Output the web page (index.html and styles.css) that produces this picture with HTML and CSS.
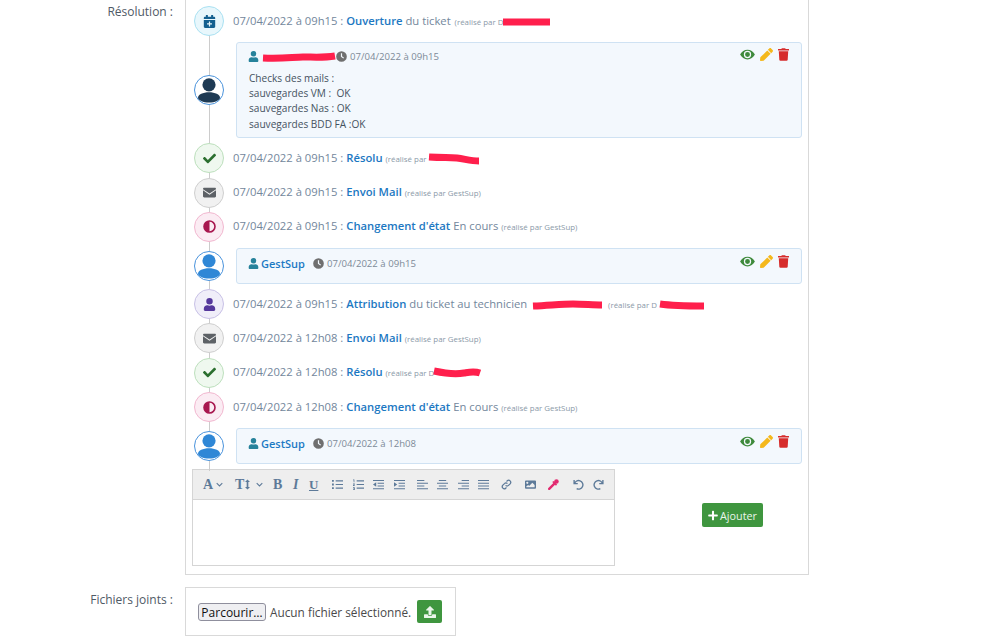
FILE: index.html
```html
<!DOCTYPE html>
<html lang="fr">
<head>
<meta charset="utf-8">
<title>Résolution</title>
<link rel="stylesheet" href="styles.css">
</head>
<body>
<svg class="sprite" xmlns="http://www.w3.org/2000/svg">
  <symbol id="i-cal" viewBox="0 0 448 512"><path d="M96 0h48c9 0 16 7 16 16v48h128V16c0-9 7-16 16-16h48c9 0 16 7 16 16v48h32c26 0 48 22 48 48v48H0v-48c0-26 22-48 48-48h32V16C80 7 87 0 96 0zM0 192h448v272c0 26-22 48-48 48H48c-26 0-48-22-48-48zm200 64v72h-72v48h72v72h48v-72h72v-48h-72v-72z" fill-rule="evenodd"/></symbol>
  <symbol id="i-check" viewBox="0 0 512 512"><path d="M174 439 7 272c-10-10-10-26 0-36l36-36c10-10 26-10 36 0l113 113L433 72c10-10 26-10 36 0l36 36c10 10 10 26 0 36L210 439c-10 10-26 10-36 0z"/></symbol>
  <symbol id="i-mail" viewBox="0 0 512 512"><path d="M48 64h416c26 0 48 22 48 48v19L256 300 0 131v-19c0-26 22-48 48-48zM0 170v230c0 26 22 48 48 48h416c26 0 48-22 48-48V170L256 340z"/></symbol>
  <symbol id="i-half" viewBox="0 0 512 512"><path d="M256 8a248 248 0 1 0 0 496 248 248 0 0 0 0-496zm0 432V72a184 184 0 0 1 0 368z" fill-rule="evenodd"/></symbol>
  <symbol id="i-user" viewBox="0 0 448 512"><path d="M224 256a128 128 0 1 0 0-256 128 128 0 0 0 0 256zm90 32h-17a174 174 0 0 1-146 0h-17C60 288 0 348 0 422v42c0 26 22 48 48 48h352c26 0 48-22 48-48v-42c0-74-60-134-134-134z"/></symbol>
  <symbol id="i-clock" viewBox="0 0 512 512"><path d="M256 8a248 248 0 1 0 0 496 248 248 0 0 0 0-496zm-28 100h56v135l90 66-33 45-113-83z" fill-rule="evenodd"/></symbol>
  <symbol id="i-eye" viewBox="0 0 576 512"><path d="M288 64C165 64 58 135 3 242a32 32 0 0 0 0 28c55 107 162 178 285 178s230-71 285-178a32 32 0 0 0 0-28C518 135 411 64 288 64zm0 336a144 144 0 1 1 0-288 144 144 0 0 1 0 288zm0-240a96 96 0 1 0 0 192 96 96 0 0 0 0-192z" fill-rule="evenodd"/></symbol>
  <symbol id="i-pencil" viewBox="0 0 512 512"><path d="M497 75 437 15c-20-20-52-20-72 0l-56 56 132 132 56-56c20-20 20-52 0-72zM286 94 12 368 0 480c-2 18 14 34 32 32l112-12 274-274z"/></symbol>
  <symbol id="i-trash" viewBox="0 0 448 512"><path d="M432 32H312l-9-19A24 24 0 0 0 281 0H167a24 24 0 0 0-21 13l-10 19H16C7 32 0 39 0 48v32c0 9 7 16 16 16h416c9 0 16-7 16-16V48c0-9-7-16-16-16zM53 467a48 48 0 0 0 48 45h246a48 48 0 0 0 48-45l21-339H32z"/></symbol>
  <symbol id="i-plus" viewBox="0 0 448 512"><path d="M416 208H272V64c0-18-14-32-32-32h-32c-18 0-32 14-32 32v144H32c-18 0-32 14-32 32v32c0 18 14 32 32 32h144v144c0 18 14 32 32 32h32c18 0 32-14 32-32V304h144c18 0 32-14 32-32v-32c0-18-14-32-32-32z"/></symbol>
  <symbol id="i-upload" viewBox="0 0 512 512"><path d="M296 384h-80c-13 0-24-11-24-24V192h-88c-18 0-27-21-14-34L242 6c8-8 20-8 28 0l152 152c13 13 4 34-14 34h-88v168c0 13-11 24-24 24zm216-8v112c0 13-11 24-24 24H24c-13 0-24-11-24-24V376c0-13 11-24 24-24h136v8c0 31 25 56 56 56h80c31 0 56-25 56-56v-8h136c13 0 24 11 24 24z"/></symbol>
  <symbol id="i-ul" viewBox="0 0 12 12"><path d="M0 1h2v2H0zM0 5h2v2H0zM0 9h2v2H0zM4 1.400h8v1.200H4zM4 5.400h8v1.200H4zM4 9.400h8v1.200H4z"/></symbol>
  <symbol id="i-ol" viewBox="0 0 12 12"><path d="M0 .5h1.500v3H.700V1.300H0zM0 5h2v.8l-1 1h1v.8H0v-.8l1-1H0zM0 9h2v3H0v-.7h1.200v-.4H.500v-.7h.700v-.5H0zM4 1.400h8v1.200H4zM4 5.400h8v1.200H4zM4 9.400h8v1.200H4z"/></symbol>
  <symbol id="i-out" viewBox="0 0 12 12"><path d="M0 1h12v1.200H0zM5 4h7v1.200H5zM5 7h7v1.200H5zM0 10h12v1.200H0zM3.500 3.500v5L0 6z"/></symbol>
  <symbol id="i-in" viewBox="0 0 12 12"><path d="M0 1h12v1.200H0zM5 4h7v1.200H5zM5 7h7v1.200H5zM0 10h12v1.200H0zM0 3.500v5L3.500 6z"/></symbol>
  <symbol id="i-left" viewBox="0 0 12 12"><path d="M0 1h8v1.200H0zM0 4h12v1.200H0zM0 7h8v1.200H0zM0 10h12v1.200H0z"/></symbol>
  <symbol id="i-center" viewBox="0 0 12 12"><path d="M2 1h8v1.200H2zM0 4h12v1.200H0zM2 7h8v1.200H2zM0 10h12v1.200H0z"/></symbol>
  <symbol id="i-right" viewBox="0 0 12 12"><path d="M4 1h8v1.200H4zM0 4h12v1.200H0zM4 7h8v1.200H4zM0 10h12v1.200H0z"/></symbol>
  <symbol id="i-just" viewBox="0 0 12 12"><path d="M0 1h12v1.200H0zM0 4h12v1.200H0zM0 7h12v1.200H0zM0 10h12v1.200H0z"/></symbol>
  <symbol id="i-link" viewBox="0 0 12 12"><path d="M5 7a2.200 2.200 0 0 0 3.200 0l2-2A2.300 2.300 0 0 0 7 1.800l-1 1M7 5a2.200 2.200 0 0 0-3.200 0l-2 2A2.300 2.300 0 0 0 5 10.200l1-1" fill="none" stroke="currentColor" stroke-width="1.400"/></symbol>
  <symbol id="i-image" viewBox="0 0 12 12"><path d="M1 1.500h10a1 1 0 0 1 1 1v7a1 1 0 0 1-1 1H1a1 1 0 0 1-1-1v-7a1 1 0 0 1 1-1zm1.500 1.500a1.200 1.200 0 1 0 0 2.400 1.200 1.200 0 0 0 0-2.400zM1.500 9h9V6.500L8 4 4.500 7.500 3.500 6.500 1.500 8z" fill-rule="evenodd"/></symbol>
  <symbol id="i-drop" viewBox="0 0 12 12"><path d="M1.300 10.700 7 5" fill="none" stroke="currentColor" stroke-width="2.600" stroke-linecap="round"/><path d="M5.300 2.700l4 4" fill="none" stroke="currentColor" stroke-width="1.800"/><circle cx="9.200" cy="2.800" r="2.500"/></symbol>
  <symbol id="i-undo" viewBox="0 0 12 12"><path d="M1.200 1v4h4M1.600 5A4.700 4.700 0 1 1 4 10.600" fill="none" stroke="currentColor" stroke-width="1.500"/></symbol>
  <symbol id="i-redo" viewBox="0 0 12 12"><path d="M10.800 1v4h-4M10.400 5A4.700 4.700 0 1 0 8 10.600" fill="none" stroke="currentColor" stroke-width="1.500"/></symbol>
  <symbol id="i-chev" viewBox="0 0 10 6"><path d="M1 1l4 4 4-4" fill="none" stroke="currentColor" stroke-width="1.500"/></symbol>
  <symbol id="i-updown" viewBox="0 0 6 12"><path d="M3 0l3 3H4v6h2l-3 3-3-3h2V3H0z"/></symbol>
  <symbol id="i-avatar" viewBox="0 0 28 28"><circle cx="14" cy="8.800" r="6.600"/><path d="M14 16.200c6 0 11 2.300 11 5.500 0 2.500-5 4.800-11 4.800S3 24.200 3 21.700c0-3.200 5-5.500 11-5.500z"/></symbol>
</svg>

<div class="field field-res">
  <div class="label">Résolution :</div>
  <div class="panel">
    <div class="timeline">
      <div class="ev">
        <span class="dot dot-cal"><svg class="ic"><use href="#i-cal"/></svg></span>
        <span class="ev-text">07/04/2022 à 09h15 : <b>Ouverture</b> du ticket <small class="by by-open">(réalisé par D<span class="red r-47"><svg viewBox="0 0 47 8" preserveAspectRatio="none"><path d="M0 4h47"/></svg></span></small></span>
      </div>
      <div class="ev ev-msg">
        <span class="dot dot-av dark"><svg class="ic-av"><use href="#i-avatar"/></svg></span>
        <div class="msg">
          <div class="msg-head">
            <svg class="ic-s teal"><use href="#i-user"/></svg>
            <b class="who who-red"><span class="red r-72"><svg viewBox="0 0 72 8" preserveAspectRatio="none"><path d="M0 5C20 6 30 4 40 4s20 1 32-1"/></svg></span></b>
            <svg class="ic-s gray"><use href="#i-clock"/></svg>
            <span class="when">07/04/2022 à 09h15</span>
            <span class="acts">
              <svg class="a-eye"><use href="#i-eye"/></svg><svg class="a-pen"><use href="#i-pencil"/></svg><svg class="a-del"><use href="#i-trash"/></svg>
            </span>
          </div>
          <p class="msg-body">Checks des mails :<br>sauvegardes VM :&nbsp; OK<br>sauvegardes Nas : OK<br>sauvegardes BDD FA :OK</p>
        </div>
      </div>
      <div class="ev">
        <span class="dot dot-ok"><svg class="ic"><use href="#i-check"/></svg></span>
        <span class="ev-text">07/04/2022 à 09h15 : <b>Résolu</b> <small class="by">(réalisé par <span class="red r-50"><svg viewBox="0 0 50 8" preserveAspectRatio="none"><path d="M0 2c15 1 20 0 28 1s14 3 22 3"/></svg></span></small></span>
      </div>
      <div class="ev">
        <span class="dot dot-mail"><svg class="ic"><use href="#i-mail"/></svg></span>
        <span class="ev-text">07/04/2022 à 09h15 : <b>Envoi Mail</b> <small class="by">(réalisé par GestSup)</small></span>
      </div>
      <div class="ev">
        <span class="dot dot-state"><svg class="ic"><use href="#i-half"/></svg></span>
        <span class="ev-text">07/04/2022 à 09h15 : <b>Changement d'état</b> En cours <small class="by">(réalisé par GestSup)</small></span>
      </div>
      <div class="ev ev-msg">
        <span class="dot dot-av"><svg class="ic-av"><use href="#i-avatar"/></svg></span>
        <div class="msg msg-short">
          <div class="msg-head">
            <svg class="ic-s teal"><use href="#i-user"/></svg>
            <b class="who">GestSup</b>
            <svg class="ic-s gray gap-clock"><use href="#i-clock"/></svg>
            <span class="when">07/04/2022 à 09h15</span>
            <span class="acts">
              <svg class="a-eye"><use href="#i-eye"/></svg><svg class="a-pen"><use href="#i-pencil"/></svg><svg class="a-del"><use href="#i-trash"/></svg>
            </span>
          </div>
        </div>
      </div>
      <div class="ev">
        <span class="dot dot-user"><svg class="ic"><use href="#i-user"/></svg></span>
        <span class="ev-text">07/04/2022 à 09h15 : <b>Attribution</b> du ticket au technicien <span class="red r-tech"><svg viewBox="0 0 69 8" preserveAspectRatio="none"><path d="M0 5c20-1 30-2 40-2s20 1 29 1"/></svg></span> <small class="by by-far">(réalisé par D<span class="red r-44"><svg viewBox="0 0 44 8" preserveAspectRatio="none"><path d="M0 3c14 2 26 2 44 2"/></svg></span></small></span>
      </div>
      <div class="ev">
        <span class="dot dot-mail"><svg class="ic"><use href="#i-mail"/></svg></span>
        <span class="ev-text">07/04/2022 à 12h08 : <b>Envoi Mail</b> <small class="by">(réalisé par GestSup)</small></span>
      </div>
      <div class="ev">
        <span class="dot dot-ok"><svg class="ic"><use href="#i-check"/></svg></span>
        <span class="ev-text">07/04/2022 à 12h08 : <b>Résolu</b> <small class="by">(réalisé par D<span class="red r-46"><svg viewBox="0 0 46 8" preserveAspectRatio="none"><path d="M0 2c14 3 24 3 30 2s10-2 16 0"/></svg></span></small></span>
      </div>
      <div class="ev">
        <span class="dot dot-state"><svg class="ic"><use href="#i-half"/></svg></span>
        <span class="ev-text">07/04/2022 à 12h08 : <b>Changement d'état</b> En cours <small class="by">(réalisé par GestSup)</small></span>
      </div>
      <div class="ev ev-msg">
        <span class="dot dot-av"><svg class="ic-av"><use href="#i-avatar"/></svg></span>
        <div class="msg msg-short">
          <div class="msg-head">
            <svg class="ic-s teal"><use href="#i-user"/></svg>
            <b class="who">GestSup</b>
            <svg class="ic-s gray gap-clock"><use href="#i-clock"/></svg>
            <span class="when">07/04/2022 à 12h08</span>
            <span class="acts">
              <svg class="a-eye"><use href="#i-eye"/></svg><svg class="a-pen"><use href="#i-pencil"/></svg><svg class="a-del"><use href="#i-trash"/></svg>
            </span>
          </div>
        </div>
      </div>
    </div>
    <div class="compose">
      <div class="editor">
        <div class="toolbar">
          <span class="tool t-font"><span class="glyph g-a">A</span><svg class="chev"><use href="#i-chev"/></svg></span>
          <span class="tool t-size"><span class="glyph g-a">T</span><svg class="updown"><use href="#i-updown"/></svg><svg class="chev"><use href="#i-chev"/></svg></span>
          <span class="tool t-b"><span class="glyph g-b">B</span></span>
          <span class="tool t-i"><span class="glyph g-i">I</span></span>
          <span class="tool t-u"><span class="glyph g-u">U</span></span>
          <span class="tool"><svg class="ti"><use href="#i-ul"/></svg></span>
          <span class="tool"><svg class="ti"><use href="#i-ol"/></svg></span>
          <span class="tool"><svg class="ti"><use href="#i-out"/></svg></span>
          <span class="tool t-end"><svg class="ti"><use href="#i-in"/></svg></span>
          <span class="tool"><svg class="ti"><use href="#i-left"/></svg></span>
          <span class="tool"><svg class="ti"><use href="#i-center"/></svg></span>
          <span class="tool"><svg class="ti"><use href="#i-right"/></svg></span>
          <span class="tool t-end"><svg class="ti"><use href="#i-just"/></svg></span>
          <span class="tool t-wide"><svg class="ti"><use href="#i-link"/></svg></span>
          <span class="tool t-wide"><svg class="ti"><use href="#i-image"/></svg></span>
          <span class="tool t-wider"><svg class="ti pink"><use href="#i-drop"/></svg></span>
          <span class="tool"><svg class="ti"><use href="#i-undo"/></svg></span>
          <span class="tool"><svg class="ti"><use href="#i-redo"/></svg></span>
        </div>
        <div class="editor-area"></div>
      </div>
      <button class="btn-add" type="button"><svg class="ic-plus"><use href="#i-plus"/></svg>Ajouter</button>
    </div>
  </div>
</div>

<div class="field field-files">
  <div class="label label-files">Fichiers joints :</div>
  <div class="panel panel-files">
    <button class="browse" type="button">Parcourir…</button>
    <span class="nofile">Aucun fichier sélectionné.</span>
    <button class="btn-up" type="button"><svg class="ic-up"><use href="#i-upload"/></svg></button>
  </div>
</div>
</body>
</html>
```

FILE: styles.css
```css
* { box-sizing: border-box; }
html, body { height: 636px; overflow: hidden; }
body {
  margin: 0;
  background: #fff;
  font-family: "Open Sans", sans-serif;
  font-size: 13px;
  color: #555;
}
.sprite { display: none; }
.field { display: flex; gap: 12px; align-items: flex-start; }
.label { width: 173px; text-align: right; color: #4f5a66; font-size: 12px; line-height: 18px; padding-top: 3px; flex: none; }
.panel { border: 1px solid #d9d9d9; }
.field-res .panel { width: 624px; height: 575px; border-top: 0; padding: 6px 6px 0; }
.field-files { margin-top: 11px; }
.label-files { padding-top: 5px; }
.panel-files { width: 271px; height: 49px; padding: 0 12px; display: flex; align-items: center; margin-top: 1px; }

.timeline { position: relative; margin-left: 2px; width: 608px; }
.timeline::before { content: ""; position: absolute; left: 15px; top: 15px; bottom: -6px; width: 1px; background: #ccc; }
.ev { position: relative; display: flex; align-items: center; min-height: 30px; margin-bottom: 4.4px; }
.ev-msg { padding: 1.2px 0; }
.dot {
  flex: none; width: 30px; height: 30px; border-radius: 50%;
  border: 1px solid #ccc; background: #f1f1f1;
  display: flex; align-items: center; justify-content: center;
  margin-right: 9px;
}
.ic { width: 13px; height: 13px; fill: currentColor; }
.dot-cal { background: #e8f7fc; border-color: #a9e1f2; color: #14608f; }
.dot-ok { background: #eff8ef; border-color: #bde0bd; color: #2b6f2f; }
.dot-mail { background: #f1f1f1; border-color: #cfcfcf; color: #5d6166; }
.dot-state { background: #fbecf3; border-color: #f2b8d0; color: #a8174f; }
.dot-user { background: #f0eef9; border-color: #c8c1e6; color: #55389c; }
.dot-av { background: #fff; border-color: #4a93dc; color: #2f87d6; }
.dot-av.dark { color: #1e3a54; }
.ic-av { width: 28px; height: 28px; fill: currentColor; }
.ev-text { color: #73879c; font-size: 11.25px; white-space: nowrap; padding-bottom: 2px; }
.ev-text b { color: #1c78c2; font-weight: 600; }
.by { font-size: 7.9px; color: #8a99a8; }
.by-open { margin-left: 1px; }
.by-far { margin-left: 3px; }
.red { display: inline-block; position: relative; height: 8px; vertical-align: -1px; }
.red svg { display: block; position: absolute; inset: 0; width: 100%; height: 100%; overflow: visible; }
.red path { fill: none; stroke: #ff1f4c; stroke-width: 7; }
.r-47 { width: 47px; }
.r-72 { width: 72px; }
.r-50 { width: 50px; }
.r-tech { width: 69px; margin-left: 3px; }
.r-44 { width: 44px; margin-left: 3px; }
.r-46 { width: 46px; }

.msg {
  flex: 1; height: 96px; margin-left: 3px;
  background: #f3f8fd; border: 1px solid #cfe2f3; border-radius: 3px;
  padding: 5px 12px 0 11px;
}
.msg-short { height: 36px; padding-top: 6px; }
.msg-head { display: flex; align-items: center; height: 17px; }
.ic-s { width: 11px; height: 11px; fill: currentColor; flex: none; }
.teal { color: #26829b; margin-right: 2px; }
.gray { color: #6f6f6f; margin-right: 3px; }
.gap-clock { margin-left: 8px; }
.who { color: #1c7ac4; font-weight: 600; font-size: 11px; }
.who-red { margin: 2px 1px 0 2px; display: inline-flex; }
.when { color: #7d8a98; font-size: 9.6px; padding-top: 1px; }
.acts { margin-left: auto; display: flex; align-items: center; gap: 5px; margin-top: -4px; }
.acts svg { fill: currentColor; display: block; }
.a-eye { width: 15px; height: 13px; color: #3e8a3c; }
.a-pen { width: 13px; height: 13px; color: #f4b81c; }
.a-del { width: 11px; height: 13px; color: #d62c2c; }
.msg-body { margin: 6px 0 0 1px; color: #45525f; font-size: 10.1px; line-height: 15.4px; }

.compose { display: flex; align-items: center; margin-top: 1px; }
.editor { width: 423px; height: 97px; border: 1px solid #d5d5d5; flex: none; }
.toolbar { height: 30px; background: #eee; border-bottom: 1px solid #d5d5d5; display: flex; align-items: center; padding-left: 10px; color: #5d7a99; }
.tool { width: 20.5px; display: flex; align-items: center; flex: none; }
.t-end { width: 23px; }
.t-wide { width: 23.5px; }
.t-wider { width: 24.5px; }
.t-font { width: 32px; }
.t-size { width: 38px; }
.t-b { width: 19px; }
.t-i { width: 17px; }
.t-u { width: 23px; }
.glyph { font-family: "Liberation Serif", serif; line-height: 1; }
.g-a { font-size: 14px; font-weight: 700; }
.g-b { font-size: 14px; font-weight: 700; }
.g-i { font-size: 14px; font-style: italic; font-weight: 700; padding-left: 1px; }
.g-u { font-size: 13px; font-weight: 700; text-decoration: underline; }
.chev { width: 7px; height: 5px; margin-left: 3px; }
.updown { width: 5px; height: 11px; fill: currentColor; margin-left: 1px; }
.t-size .chev { margin-left: 6px; }
.ti { width: 11px; height: 11px; fill: currentColor; }
.pink { color: #e22a70; }
.editor-area { height: 65px; background: #fff; }
.btn-add {
  margin: 0 0 5px 87px; width: 61px; height: 24px; padding: 0;
  border: 0; border-radius: 2px; background: #3f963f; color: #eaf5ea;
  font: 10.8px "Open Sans", sans-serif; display: flex; align-items: center; justify-content: center; gap: 2px;
}
.ic-plus { width: 10px; height: 11px; fill: #fff; }
.browse {
  height: 18px; width: 68px; padding: 0; background: #efeff2; border: 1px solid #8f8f9d; border-radius: 3px;
  font: 12px "Open Sans", sans-serif; color: #111; flex: none;
}
.nofile { margin-left: 4px; color: #4a4a4a; font-size: 11.8px; white-space: nowrap; }
.btn-up {
  margin-left: 6px; width: 25px; height: 23px; padding: 0; border: 0; border-radius: 2px;
  background: #3f963f; display: flex; align-items: center; justify-content: center; flex: none;
}
.ic-up { width: 12px; height: 12px; fill: #eaf5ea; }
```
